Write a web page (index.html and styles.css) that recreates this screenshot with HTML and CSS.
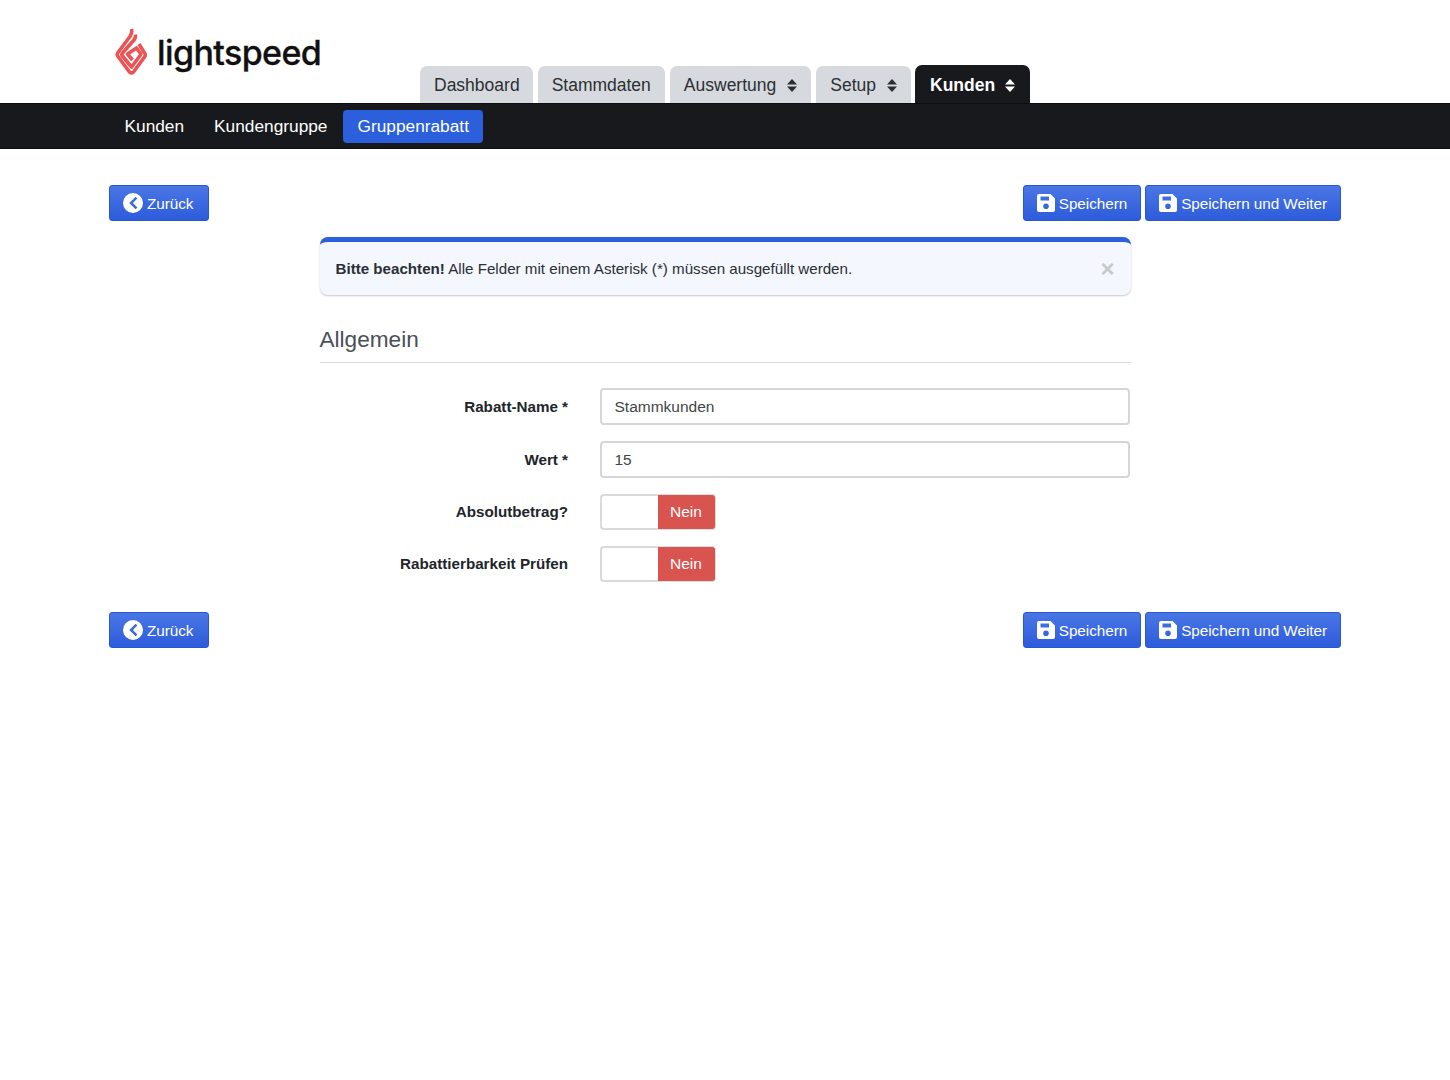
FILE: index.html
```html
<!DOCTYPE html>
<html lang="de">
<head>
<meta charset="utf-8">
<title>Gruppenrabatt</title>
<link rel="stylesheet" href="styles.css">
</head>
<body>
<header class="top">
  <a class="logo">
    <svg class="logo-mark" viewBox="0 0 32 47" width="32" height="47" aria-hidden="true">
      <path class="lm" d="M16.500 1C17.500 4 16.500 6 15 8.500L3 24.500Q1.500 26.500 3 28.500L14.500 44Q16.500 46 18.500 44L29.500 29Q31 27 29.500 25L24 16"/>
      <path class="lm" d="M20.500 6.500C21 9 20 10.500 19 12L7 25.500Q6.500 26.500 7 27.500L16.500 39L25.500 27Q26 26.500 25.500 25.500L21.500 20L12.500 26L17.500 32"/>
    </svg>
    <span class="logo-text">lightspeed</span>
  </a>
  <nav class="tabs">
    <a class="tab">Dashboard</a>
    <a class="tab">Stammdaten</a>
    <a class="tab">Auswertung <svg class="sort" viewBox="0 0 10 13" width="10" height="13"><path d="M5 0 10 5.500H0ZM0 7.500H10L5 13Z"/></svg></a>
    <a class="tab">Setup <svg class="sort" viewBox="0 0 10 13" width="10" height="13"><path d="M5 0 10 5.500H0ZM0 7.500H10L5 13Z"/></svg></a>
    <a class="tab tab-active">Kunden <svg class="sort" viewBox="0 0 10 13" width="10" height="13"><path d="M5 0 10 5.500H0ZM0 7.500H10L5 13Z"/></svg></a>
  </nav>
</header>
<nav class="subnav">
  <a class="sub">Kunden</a>
  <a class="sub">Kundengruppe</a>
  <a class="sub sub-active">Gruppenrabatt</a>
</nav>
<main class="page">
  <div class="actions">
    <a class="btn btn-back"><svg class="ico" viewBox="0 0 20 20" width="20" height="20"><path fill-rule="evenodd" d="M10 0a10 10 0 1 0 0 20a10 10 0 0 0 0-20ZM12.600 3.800 14.400 5.600 9.900 10 14.400 14.400 12.600 16.200 6.300 10Z"/></svg>Zurück</a>
    <div class="right">
      <a class="btn"><svg class="ico save" viewBox="0 0 18 18" width="18" height="18"><path fill-rule="evenodd" d="M2 0H13.500L18 4.500V16a2 2 0 0 1-2 2H2a2 2 0 0 1-2-2V2a2 2 0 0 1 2-2ZM3.500 2.500V6.500H12V2.500ZM9 9.500a2.800 2.800 0 1 0 0 5.600a2.800 2.800 0 0 0 0-5.600Z"/></svg>Speichern</a>
      <a class="btn"><svg class="ico save" viewBox="0 0 18 18" width="18" height="18"><path fill-rule="evenodd" d="M2 0H13.500L18 4.500V16a2 2 0 0 1-2 2H2a2 2 0 0 1-2-2V2a2 2 0 0 1 2-2ZM3.500 2.500V6.500H12V2.500ZM9 9.500a2.800 2.800 0 1 0 0 5.600a2.800 2.800 0 0 0 0-5.600Z"/></svg>Speichern und Weiter</a>
    </div>
  </div>
  <section class="form">
    <div class="alert">
      <span><b>Bitte beachten!</b> Alle Felder mit einem Asterisk (*) müssen ausgefüllt werden.</span>
      <span class="close">×</span>
    </div>
    <h2 class="legend">Allgemein</h2>
    <div class="row row-input"><label class="lbl">Rabatt-Name *</label><div class="input">Stammkunden</div></div>
    <div class="row row-input"><label class="lbl">Wert *</label><div class="input">15</div></div>
    <div class="row"><label class="lbl">Absolutbetrag?</label><div class="toggle"><span class="t-blank"></span><span class="t-no">Nein</span></div></div>
    <div class="row"><label class="lbl">Rabattierbarkeit Prüfen</label><div class="toggle"><span class="t-blank"></span><span class="t-no">Nein</span></div></div>
  </section>
  <div class="actions actions-bottom">
    <a class="btn btn-back"><svg class="ico" viewBox="0 0 20 20" width="20" height="20"><path fill-rule="evenodd" d="M10 0a10 10 0 1 0 0 20a10 10 0 0 0 0-20ZM12.600 3.800 14.400 5.600 9.900 10 14.400 14.400 12.600 16.200 6.300 10Z"/></svg>Zurück</a>
    <div class="right">
      <a class="btn"><svg class="ico save" viewBox="0 0 18 18" width="18" height="18"><path fill-rule="evenodd" d="M2 0H13.500L18 4.500V16a2 2 0 0 1-2 2H2a2 2 0 0 1-2-2V2a2 2 0 0 1 2-2ZM3.500 2.500V6.500H12V2.500ZM9 9.500a2.800 2.800 0 1 0 0 5.600a2.800 2.800 0 0 0 0-5.600Z"/></svg>Speichern</a>
      <a class="btn"><svg class="ico save" viewBox="0 0 18 18" width="18" height="18"><path fill-rule="evenodd" d="M2 0H13.500L18 4.500V16a2 2 0 0 1-2 2H2a2 2 0 0 1-2-2V2a2 2 0 0 1 2-2ZM3.500 2.500V6.500H12V2.500ZM9 9.500a2.800 2.800 0 1 0 0 5.600a2.800 2.800 0 0 0 0-5.600Z"/></svg>Speichern und Weiter</a>
    </div>
  </div>
</main>
</body>
</html>
```
FILE: styles.css
```css
* { box-sizing: border-box; }
html, body { margin: 0; background: #fff; }
body { font-family: "Liberation Sans", Arial, sans-serif; font-size: 16px; color: #212529; height: 1080px; overflow: hidden; }

.top { height: 103px; display: flex; padding-left: 115px; }
.logo { display: flex; align-items: flex-start; width: 305px; padding-top: 28px; }
.logo-mark { flex: none; }
.lm { fill: none; stroke: #ea5455; stroke-width: 3.600; stroke-linejoin: round; stroke-linecap: butt; }
.logo-text { font-family: Inter, sans-serif; font-weight: 500; font-size: 34px; line-height: 50px; color: #111; margin-left: 10px; letter-spacing: -0.6px; -webkit-text-stroke: 0.3px #111; }
.tabs { display: flex; align-items: flex-end; gap: 5px; }
.tab { height: 37px; padding: 1px 14px 0; background: #d6dade; color: #2b2f33; border-radius: 7px 7px 0 0; display: flex; align-items: center; gap: 11px; font-size: 17.500px; }
.tab:first-child { padding-right: 13px; }
.tab-active { height: 38px; background: #18191d; color: #fff; font-weight: 700; padding: 2px 15px 0; gap: 9.500px; margin-left: -1px; }
.sort { fill: #2b2f33; flex: none; }
.tab-active .sort { fill: #fff; }

.subnav { height: 46px; background: #18191d; border-top: 1px solid #0c0d0f; border-bottom: 1px solid #0c0d0f; padding: 6px 0 0 110px; display: flex; align-items: flex-start; gap: 1px; }
.sub { height: 33px; padding: 0 14.500px; display: flex; align-items: center; color: #fff; font-size: 17.300px; border-radius: 4px; }
.sub-active { background: #2b5fdc; }

.page { padding: 36px 109px 0; }
.actions { display: flex; justify-content: space-between; }
.actions-bottom { margin-top: 30px; }
.right { display: flex; gap: 4px; }
.btn { height: 36px; padding: 1px 13px 0; background: linear-gradient(#4a76e4, #2d5cdc); border: 1px solid #2a56cf; border-radius: 3px; color: #fff; display: flex; align-items: center; font-size: 15.300px; letter-spacing: -0.05px; }
.btn-back { padding-right: 15px; }
.ico { fill: #fff; margin: -1px 4px 0 0; flex: none; }

.form { width: 811px; margin: 15.500px auto 0; }
.alert { height: 58px; background: #f4f7fd; border-top: 5px solid #2b5fdc; border-radius: 8px; box-shadow: 0 1px 2px rgba(0,0,0,.22); padding: 0 16px; display: flex; align-items: center; justify-content: space-between; font-size: 15.150px; color: #2a2f36; }
.close { color: #c7c9cc; font-size: 24px; font-weight: 700; line-height: 1; margin-top: 1px; }
.legend { margin: 30px 0 25.500px; padding-bottom: 8px; height: 38px; font-size: 22.600px; line-height: 30px; font-weight: 400; color: #495057; border-bottom: 1px solid #dcdfe2; }
.row { display: flex; align-items: center; margin-bottom: 16px; }
.row-input { margin-bottom: 16.500px; }
.lbl { width: 248.500px; text-align: right; font-weight: 700; font-size: 15.200px; color: #212529; margin-right: 31.500px; padding-bottom: 1px; }
.row-input .lbl { padding-bottom: 0; }
.input { width: 530px; height: 36.500px; border: 2px solid #d4d6d8; border-radius: 4px; padding: 1px 13px 0; display: flex; align-items: center; font-size: 15.500px; color: #40454a; background: #fff; }
.toggle { width: 116px; height: 36px; display: flex; }
.t-blank { width: 58px; border: 2px solid #d8dadb; border-right: 0; border-radius: 4px 0 0 4px; }
.t-no { width: 58px; background: #d9534f; border: 1px solid #dcdfe0; border-left: 0; border-radius: 0 4px 4px 0; color: #fff; display: flex; align-items: center; justify-content: center; font-size: 15.500px; }
```
